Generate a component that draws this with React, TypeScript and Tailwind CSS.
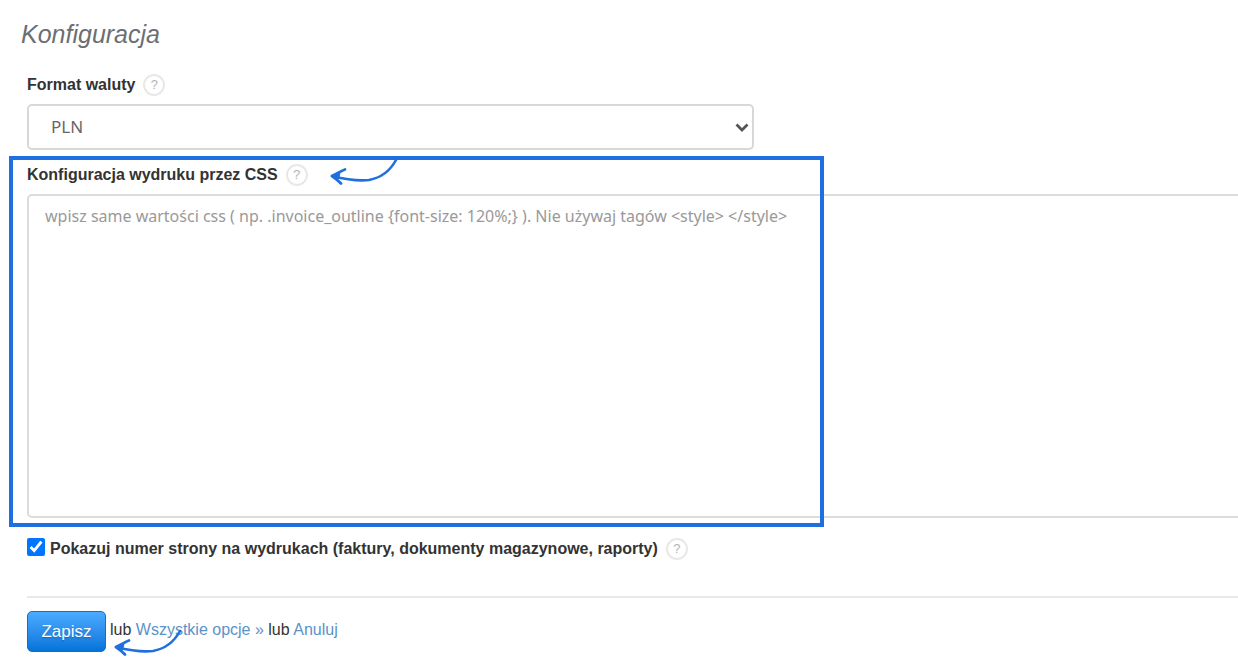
import { useState } from "react";

type LabelProps = {
    htmlFor: string;
    text: string;
};

function Help() {
    return (
        <button
            type="button"
            aria-label="Pomoc"
            className="flex h-[22px] w-[22px] shrink-0 items-center justify-center rounded-full border-2 border-[#e8e8e8] text-[13px] text-[#b5b5b5]"
        >
            ?
        </button>
    );
}

function FieldLabel({ htmlFor, text }: LabelProps) {
    return (
        <div className="flex h-[22px] items-center gap-2">
            <label htmlFor={htmlFor} className="text-[16px] font-bold whitespace-nowrap">
                {text}
            </label>
            <Help />
        </div>
    );
}

function Arrow({ className }: { className: string }) {
    return (
        <svg
            viewBox="0 0 70 30"
            fill="none"
            stroke="#1f6fe0"
            strokeLinecap="round"
            strokeLinejoin="round"
            className={`pointer-events-none absolute h-[30px] w-[70px] ${className}`}
        >
            <path d="M67 2C61 13 51 20 40 22C28 23.500 15 21 3 18" strokeWidth="2.6" />
            <path d="M16 11.500C12 13 8 15.500 3 18C6 20 9 22.500 12 25.500" strokeWidth="2.8" />
            <path d="M3 18L11 15.500L9.500 20.500Z" fill="#1f6fe0" strokeWidth="1" />
        </svg>
    );
}

export default function App() {
    const [currency, setCurrency] = useState("PLN");
    const [css, setCss] = useState("");
    const [showNumber, setShowNumber] = useState(true);

    return (
        <main className="overflow-hidden bg-white pt-4 pb-3 pl-[21px] font-['Liberation_Sans',Arial,sans-serif] text-[#333]">
            <h1 className="text-[25px] leading-9 text-[#6c6e72] italic">Konfiguracja</h1>

            <form className="mt-[22px] pl-[6px]" onSubmit={(e) => e.preventDefault()}>
                <FieldLabel htmlFor="currency" text="Format waluty" />
                <div className="relative mt-2 w-3/5 max-w-[727px]">
                    <select
                        id="currency"
                        value={currency}
                        onChange={(e) => setCurrency(e.target.value)}
                        className="block h-[46px] w-full appearance-none rounded-[5px] border-2 border-[#d8d8d8] bg-white px-[22px] font-['Noto_Sans',sans-serif] text-[17px] text-[#666]"
                    >
                        <option>PLN</option>
                        <option>EUR</option>
                    </select>
                    <svg
                        viewBox="0 0 14 9"
                        fill="none"
                        stroke="#555"
                        strokeWidth="2.8"
                        className="pointer-events-none absolute top-[19px] right-[5px] h-[9px] w-[14px]"
                    >
                        <path d="M1.5 1.5L7 7L12.5 1.5" />
                    </svg>
                </div>

                {/* wyróżnione pole CSS */}
                <div className="relative mt-[14px]">
                    <FieldLabel htmlFor="css" text="Konfiguracja wydruku przez CSS" />
                    <div className="-mr-4">
                        <textarea
                            id="css"
                            value={css}
                            onChange={(e) => setCss(e.target.value)}
                            placeholder="wpisz same wartości css ( np. .invoice_outline {font-size: 120%;} ). Nie używaj tagów <style> </style>"
                            className="mt-2 block h-[324px] w-full resize-none rounded-[5px] border-2 border-[#dcdcdc] px-4 py-2 font-['Noto_Sans',sans-serif] text-[16px] leading-6 text-[#666] placeholder:text-[#999]"
                        />
                    </div>
                    <div className="pointer-events-none absolute -top-2 -bottom-[9px] -left-[18px] w-[815px] border-4 border-[#1f6fe0]" />
                    <Arrow className="-top-[6px] left-[302px]" />
                </div>

                <div className="mt-5 flex items-center gap-[5px]">
                    <input
                        id="page-number"
                        type="checkbox"
                        checked={showNumber}
                        onChange={(e) => setShowNumber(e.target.checked)}
                        className="mb-1 h-[18px] w-[18px] accent-[#0075ff]"
                    />
                    <FieldLabel
                        htmlFor="page-number"
                        text="Pokazuj numer strony na wydrukach (faktury, dokumenty magazynowe, raporty)"
                    />
                </div>

                <div className="relative mt-9 border-t-2 border-[#e8e8e8] pt-[13px]">
                    <div className="flex items-center gap-1 text-[16px]">
                        <button
                            type="submit"
                            className="h-[41px] w-[79px] rounded-[5px] border border-[#1b6fb8] bg-linear-to-b from-[#4aabff] to-[#0074da] text-[17px] text-white text-shadow-sm"
                        >
                            Zapisz
                        </button>
                        <p className="pb-1">
                            lub{" "}
                            <a href="#opcje" className="text-[#5a93c9]">
                                Wszystkie opcje »
                            </a>{" "}
                            lub{" "}
                            <a href="#anuluj" className="text-[#5a93c9]">
                                Anuluj
                            </a>
                        </p>
                    </div>
                    <Arrow className="top-[31px] left-[86px]" />
                </div>
            </form>
        </main>
    );
}
